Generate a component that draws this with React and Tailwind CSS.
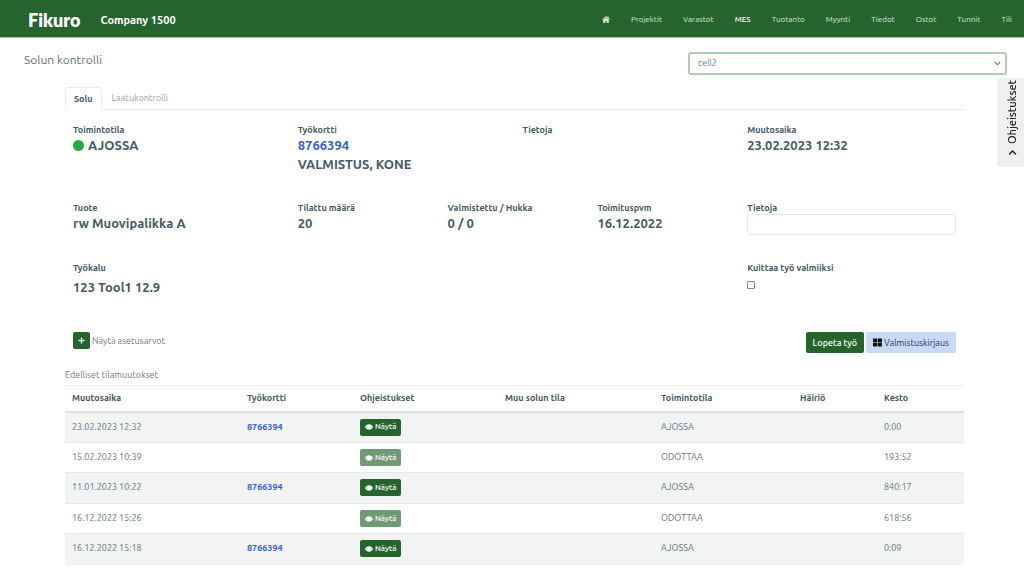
import React, { useState } from "react";
import { FaPlus, FaThLarge, FaChevronDown } from "react-icons/fa";

const navItems = ["Projektit", "Varastot", "MES", "Tuotanto", "Myynti", "Tiedot", "Ostot", "Tunnit", "Tili"];

const history = [
  { changed: "23.02.2023 12:32", card: "8766394", state: "AJOSSA", duration: "0:00" },
  { changed: "15.02.2023 10:39", card: "", state: "ODOTTAA", duration: "193:52" },
  { changed: "11.01.2023 10:22", card: "8766394", state: "AJOSSA", duration: "840:17" },
  { changed: "16.12.2022 15:26", card: "", state: "ODOTTAA", duration: "618:56" },
  { changed: "16.12.2022 15:18", card: "8766394", state: "AJOSSA", duration: "0:09" },
];

function HomeIcon() {
  return (
    <svg viewBox="0 0 16 14" fill="currentColor" className="h-[7px] w-2">
      <path d="M8 0.200 0 6.800l1.200 1.400L8 2.700l6.800 5.500L16 6.800 13.300 4.600V1h-2.300v1.700z" />
      <path d="M8 3.500 2.300 8.100V13.800h4.400V10h2.600v3.800h4.400V8.100z" />
    </svg>
  );
}

function EyeIcon() {
  return (
    <svg viewBox="0 0 18 12" className="h-[6px] w-2">
      <path
        fill="currentColor"
        fillRule="evenodd"
        d="M9 0C5 0 1.8 2.500 0 6c1.800 3.500 5 6 9 6s7.200-2.500 9-6C16.200 2.500 13 0 9 0zM3.200 6c.6-1.200 1.500-2.200 2.600-2.900a4 4 0 0 0 0 5.800C4.700 8.200 3.800 7.200 3.200 6zM14.800 6c-.6 1.200-1.500 2.200-2.600 2.900a4 4 0 0 0 0-5.800c1.100.7 2 1.700 2.600 2.900z"
      />
    </svg>
  );
}

function Header() {
  return (
    <header className="flex h-[38px] items-center border-b border-[#a9cbab] bg-[#25642d] pt-[2px] pl-7 pr-3 text-white">
      <a href="#" className="font-['Lato'] text-[18px] leading-5 font-extrabold">Fikuro</a>
      <span className="ml-5 text-[11px] leading-5 font-bold">Company 1500</span>
      <nav className="ml-auto flex items-center gap-[21px] text-[8px] leading-5 text-[#dbe8dc]">
        <a href="#" aria-label="Etusivu">
          <HomeIcon />
        </a>
        {navItems.map((item) => (
          <a key={item} href="#" className={item === "MES" ? "font-medium text-white" : ""}>
            {item}
          </a>
        ))}
      </nav>
    </header>
  );
}

function Field({ label, className, children }) {
  return (
    <div className={`px-2 ${className}`}>
      <h3 className="text-[9px] leading-3 font-bold">{label}</h3>
      <div className="text-[13px] leading-[19px] font-bold">{children}</div>
    </div>
  );
}

function CellDetails() {
  const [done, setDone] = useState(false);

  return (
    <section className="pt-[14px] text-[#455a64]">
      <div className="grid min-h-[78px] grid-cols-12">
        <Field label="Toimintotila" className="col-span-3">
          <span className="flex items-center gap-1">
            <span className="h-[11px] w-[11px] rounded-full bg-[#28a745]" />
            AJOSSA
          </span>
        </Field>
        <Field label="Työkortti" className="col-span-3">
          <a href="#" className="block text-[#3761c4]">8766394</a>
          VALMISTUS, KONE
        </Field>
        <Field label="Tietoja" className="col-span-3" />
        <Field label="Muutosaika" className="col-span-3">23.02.2023 12:32</Field>
      </div>

      <div className="grid min-h-[60px] grid-cols-12">
        <Field label="Tuote" className="col-span-3">rw Muovipalikka A</Field>
        <Field label="Tilattu määrä" className="col-span-2">20</Field>
        <Field label="Valmistettu / Hukka" className="col-span-2">0 / 0</Field>
        <Field label="Toimituspvm" className="col-span-2">16.12.2022</Field>
        <div className="col-span-3 px-2">
          <label htmlFor="info" className="block text-[9px] leading-3 font-bold">Tietoja</label>
          <input
            id="info"
            type="text"
            className="block h-[21px] w-full rounded-[3px] border border-[#e3e6e8] bg-white px-2 text-[9px]"
          />
        </div>
      </div>

      <div className="grid min-h-[70px] grid-cols-12">
        <div className="col-span-9 px-2">
          <h3 className="text-[9px] leading-3 font-bold">Työkalu</h3>
          <p className="mt-1 text-[13px] leading-[19px] font-bold">123 Tool1 12.9</p>
        </div>
        <div className="col-span-3 px-2">
          <label htmlFor="done" className="block text-[9px] leading-3 font-bold">Kuittaa työ valmiiksi</label>
          <input
            id="done"
            type="checkbox"
            checked={done}
            onChange={(e) => setDone(e.target.checked)}
            className="mt-[7px] block h-2 w-2 appearance-none rounded-[1px] border border-[#8a8a8a] bg-white checked:bg-[#25642d]"
          />
        </div>
      </div>

      <div className="flex items-start px-2">
        <label className="flex items-center gap-[2px] text-[9px] leading-3 text-[#6c7b82]">
          <button
            type="button"
            className="flex h-[17px] w-[17px] items-center justify-center rounded-[2px] bg-[#25642d] text-white"
          >
            <FaPlus className="h-[7px] w-[7px]" />
          </button>
          Näytä asetusarvot
        </label>
        <div className="ml-auto flex gap-[2px] text-[9px] leading-3">
          <button type="button" className="h-[21px] rounded-[2px] bg-[#25642d] px-[7px] font-medium text-white">
            Lopeta työ
          </button>
          <button
            type="button"
            className="flex h-[21px] items-center gap-[2px] rounded-[2px] bg-[#c9d9f8] px-[7px] text-[#2f3843]"
          >
            <FaThLarge className="h-[9px] w-[9px] text-[#111]" />
            Valmistuskirjaus
          </button>
        </div>
      </div>
    </section>
  );
}

function HistoryTable() {
  return (
    <section className="mt-4">
      <h2 className="text-[9px] leading-3 text-[#6c7b82]">Edelliset tilamuutokset</h2>
      <table className="mt-1 w-full table-fixed text-left text-[9px] leading-3">
        <thead>
          <tr className="h-[26px] border-t border-b-2 border-t-[#eceff0] border-b-[#dde2e3] text-[#455a64]">
            <th className="w-[175px] px-[7px]">Muutosaika</th>
            <th className="w-[113px] px-[7px]">Työkortti</th>
            <th className="w-[145px] px-[7px]">Ohjeistukset</th>
            <th className="w-[156px] px-[7px]">Muu solun tila</th>
            <th className="w-[139px] px-[7px]">Toimintotila</th>
            <th className="w-[84px] px-[7px]">Häiriö</th>
            <th className="px-[7px]">Kesto</th>
          </tr>
        </thead>
        <tbody className="text-[#64737a]">
          {history.map((row) => (
            <tr
              key={row.changed}
              className="border-b border-[#e4e8e9] align-top last:border-b-0 odd:h-[31px] odd:bg-[#f2f4f4] even:h-[30px]"
            >
              <td className="px-[7px] pt-2">{row.changed}</td>
              <td className="px-[7px] pt-2">
                {row.card && <a href="#" className="font-bold text-[#3761c4]">{row.card}</a>}
              </td>
              <td className="px-[7px] pt-[6px]">
                <button
                  type="button"
                  disabled={!row.card}
                  className="flex h-[17px] items-center gap-[2px] rounded-[2px] bg-[#25642d] px-[5px] text-[8px] font-medium text-white disabled:opacity-65"
                >
                  <EyeIcon />
                  Näytä
                </button>
              </td>
              <td />
              <td className="px-[7px] pt-2">{row.state}</td>
              <td />
              <td className="px-[7px] pt-2">{row.duration}</td>
            </tr>
          ))}
        </tbody>
      </table>
    </section>
  );
}

export default function App() {
  const [cell, setCell] = useState("cell2");

  return (
    <div className="min-h-screen bg-white font-['Ubuntu','Noto_Sans',sans-serif]">
      <Header />

      <div className="flex items-start justify-between pt-[14px] pr-[17px] pl-6">
        <h1 className="text-[12px] leading-4 text-[#5c6d75]">Solun kontrolli</h1>
        <div className="relative w-[319px]">
          <select
            aria-label="Solu"
            value={cell}
            onChange={(e) => setCell(e.target.value)}
            className="block h-[23px] w-full appearance-none rounded-[3px] border-2 border-[#a9d1ae] bg-white px-2 text-[9px] text-[#6f8188] outline-none"
          >
            <option value="cell1">cell1</option>
            <option value="cell2">cell2</option>
          </select>
          <FaChevronDown className="pointer-events-none absolute top-2 right-[6px] h-[7px] w-[7px] text-[#5c6d75]" />
        </div>
      </div>

      <main className="mt-3 mr-[60px] ml-[65px]">
        <div className="flex border-b border-[#e9ecee] text-[9px] leading-3">
          <button
            type="button"
            className="-mb-px h-[23px] rounded-t-[3px] border border-b-0 border-[#e9ecee] bg-white px-2 font-bold text-[#455a64]"
          >
            Solu
          </button>
          <button type="button" className="px-[10px] text-[#9aa4a9]">Laatukontrolli</button>
        </div>
        <CellDetails />
        <HistoryTable />
      </main>

      <button
        type="button"
        className="fixed top-[78px] right-0 flex h-[89px] w-[27px] rotate-180 items-center justify-start gap-1 rounded-r-[3px] bg-[#efefef] pt-[10px] pr-1 text-[11px] leading-4 font-medium text-[#222] [writing-mode:vertical-rl]"
      >
        <FaChevronDown className="h-[9px] w-[9px]" />
        Ohjeistukset
      </button>
    </div>
  );
}
